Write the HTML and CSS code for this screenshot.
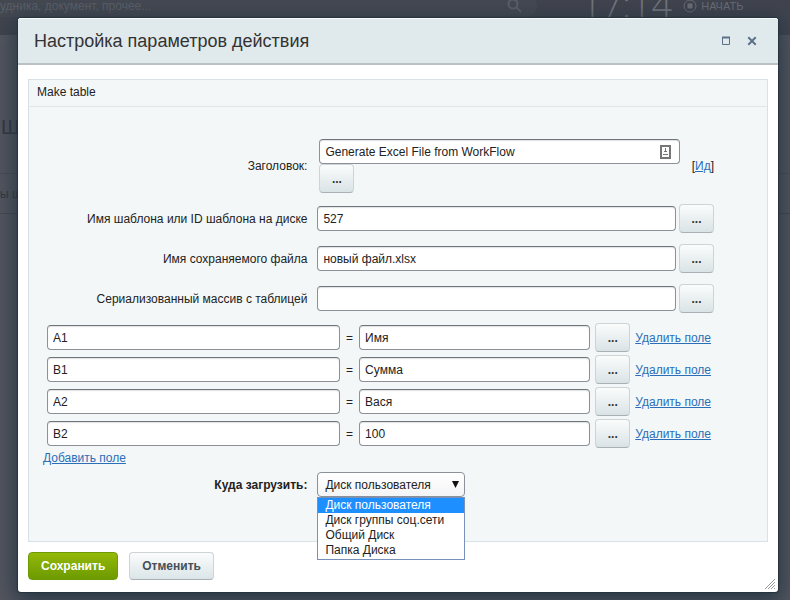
FILE: index.html
```html
<!DOCTYPE html>
<html lang="ru">
<head>
    <meta charset="UTF-8">
    <meta name="viewport" content="width=device-width, initial-scale=1.0">
    <title>Настройка параметров действия</title>
    <link rel="stylesheet" href="styles.css">
</head>
<body>
    <div class="page">
        <div class="topbar">
            <div class="search">
                <input type="text" class="search-input" aria-label="Поиск" placeholder="удника, документ, прочее...">
                <svg class="search-icon" width="16" height="16" viewBox="0 0 16 16" fill="none" stroke="currentColor" stroke-width="2">
                    <circle cx="6" cy="6" r="4.5"/>
                    <path d="M9.5 9.5L14 14"/>
                </svg>
            </div>
            <div class="clock">17:14</div>
            <div class="workday">
                <svg width="14" height="14" viewBox="0 0 14 14" fill="none" stroke="currentColor">
                    <circle cx="7" cy="7" r="6"/>
                    <rect x="4.5" y="4.5" width="5" height="5" fill="currentColor" stroke="none"/>
                </svg>
                <span>НАЧАТЬ</span>
            </div>
        </div>
        <div class="content">
            <div class="content-title">Ш</div>
            <div class="content-row">ы ш</div>
        </div>
    </div>

    <div class="overlay">
        <div class="dialog" role="dialog" aria-labelledby="dialog-title">
            <div class="dialog-header">
                <h1 class="dialog-title" id="dialog-title">Настройка параметров действия</h1>
                <button type="button" class="icon-btn" aria-label="Развернуть">
                    <svg width="10" height="10" viewBox="0 0 10 10" fill="none" stroke="currentColor">
                        <path d="M1.500 1v7.500h7V1"/>
                        <path d="M1 1.500h8" stroke-width="2"/>
                    </svg>
                </button>
                <button type="button" class="icon-btn" aria-label="Закрыть">
                    <svg width="10" height="10" viewBox="0 0 10 10" fill="none" stroke="currentColor" stroke-width="2">
                        <path d="M1.300 1.300L8.700 8.700M8.700 1.300L1.300 8.700"/>
                    </svg>
                </button>
            </div>

            <form class="dialog-body">
                <div class="panel">
                    <h2 class="panel-title">Make table</h2>

                    <div class="fields">
                        <div class="row">
                            <label class="label" for="title">Заголовок:</label>
                            <div class="control control-title">
                                <div class="title-box">
                                    <div class="input-wrap">
                                        <input type="text" class="input" id="title" value="Generate Excel File from WorkFlow">
                                        <svg class="autofill" width="11" height="14" viewBox="0 0 11 14" fill="none" stroke="currentColor">
                                            <rect x="1" y="1" width="9" height="12" stroke-width="2"/>
                                            <path d="M5.500 3v4M4 6.500h3M3 9.500h5"/>
                                        </svg>
                                    </div>
                                    <button type="button" class="btn-more">...</button>
                                </div>
                                <span class="id-link">[<a href="#">Ид</a>]</span>
                            </div>
                        </div>
                        <div class="row">
                            <label class="label" for="template">Имя шаблона или ID шаблона на диске</label>
                            <div class="control">
                                <input type="text" class="input" id="template" value="527">
                                <button type="button" class="btn-more">...</button>
                            </div>
                        </div>
                        <div class="row">
                            <label class="label" for="filename">Имя сохраняемого файла</label>
                            <div class="control">
                                <input type="text" class="input" id="filename" value="новый файл.xlsx">
                                <button type="button" class="btn-more">...</button>
                            </div>
                        </div>
                        <div class="row">
                            <label class="label" for="data">Сериализованный массив с таблицей</label>
                            <div class="control">
                                <input type="text" class="input" id="data" value="">
                                <button type="button" class="btn-more">...</button>
                            </div>
                        </div>
                    </div>

                    <div class="cells">
                        <div class="cell-row">
                            <input type="text" class="input cell-name" aria-label="Ячейка" value="A1">
                            <span class="equals">=</span>
                            <input type="text" class="input cell-value" aria-label="Значение" value="Имя">
                            <button type="button" class="btn-more">...</button>
                            <a href="#" class="cell-delete">Удалить поле</a>
                        </div>
                        <div class="cell-row">
                            <input type="text" class="input cell-name" aria-label="Ячейка" value="B1">
                            <span class="equals">=</span>
                            <input type="text" class="input cell-value" aria-label="Значение" value="Сумма">
                            <button type="button" class="btn-more">...</button>
                            <a href="#" class="cell-delete">Удалить поле</a>
                        </div>
                        <div class="cell-row">
                            <input type="text" class="input cell-name" aria-label="Ячейка" value="A2">
                            <span class="equals">=</span>
                            <input type="text" class="input cell-value" aria-label="Значение" value="Вася">
                            <button type="button" class="btn-more">...</button>
                            <a href="#" class="cell-delete">Удалить поле</a>
                        </div>
                        <div class="cell-row">
                            <input type="text" class="input cell-name" aria-label="Ячейка" value="B2">
                            <span class="equals">=</span>
                            <input type="text" class="input cell-value" aria-label="Значение" value="100">
                            <button type="button" class="btn-more">...</button>
                            <a href="#" class="cell-delete">Удалить поле</a>
                        </div>
                    </div>
                    <a href="#" class="add-field">Добавить поле</a>

                    <div class="row row-upload">
                        <label class="label label-bold" for="upload">Куда загрузить:</label>
                        <div class="control">
                            <div class="select-wrap">
                                <select class="select" id="upload">
                                    <option selected>Диск пользователя</option>
                                    <option>Диск группы соц.сети</option>
                                    <option>Общий Диск</option>
                                    <option>Папка Диска</option>
                                </select>
                                <svg class="select-arrow" width="7" height="7" viewBox="0 0 7 7" fill="currentColor">
                                    <path d="M0 0h7L3.500 7z"/>
                                </svg>
                                <ul class="select-list">
                                    <li class="active">Диск пользователя</li>
                                    <li>Диск группы соц.сети</li>
                                    <li>Общий Диск</li>
                                    <li>Папка Диска</li>
                                </ul>
                            </div>
                        </div>
                    </div>
                </div>

                <div class="buttons">
                    <button type="submit" class="btn btn-save">Сохранить</button>
                    <button type="button" class="btn btn-cancel">Отменить</button>
                </div>
            </form>

            <svg class="resize" width="12" height="12" viewBox="0 0 12 12" fill="none" stroke="currentColor">
                <path d="M1 11L11 1M4 11L11 4M7 11L11 7M10 11L11 10"/>
            </svg>
        </div>
    </div>
</body>
</html>
```

FILE: styles.css
```css
* {
    box-sizing: border-box;
}
body {
    margin: 0;
    font-family: "Liberation Sans", Arial, sans-serif;
    font-size: 12px;
    color: #222;
    background: #55565f;
}
a {
    color: #2a6fb8;
}
input, select, button {
    font-family: inherit;
    font-size: inherit;
    color: inherit;
}

/* page behind the dialog */
.page {
    min-height: 100vh;
    overflow: hidden;
}
.topbar {
    display: flex;
    align-items: flex-start;
    height: 35px;
    background: #41444e;
    color: #6b6e77;
}
.search {
    display: flex;
    align-items: center;
    flex: 0 0 68%;
    height: 22px;
    padding-right: 14px;
    margin-top: -5px;
    background: #454952;
    border-radius: 0 11px 11px 0;
    color: #5c6069;
}
.search-input {
    flex: 1;
    min-width: 0;
    padding: 0;
    border: 0;
    background: none;
    font-size: 12px;
}
.search-input::placeholder {
    color: #5c6069;
    opacity: 1;
}
.clock {
    width: 102px;
    margin: -19px 0 0 44px;
    font-family: "Open Sans", sans-serif;
    font-size: 36px;
    font-weight: 300;
    line-height: 48px;
    color: #74777f;
}
.workday {
    display: flex;
    align-items: center;
    gap: 4px;
    height: 12px;
    font-size: 11px;
}
.content {
    color: #34363f;
}
.content-title {
    height: 139px;
    padding: 81px 0 0 1px;
    border-bottom: 1px solid #4a4d57;
    font-size: 20px;
    line-height: 22px;
}
.content-row {
    height: 40px;
    line-height: 40px;
    border-bottom: 1px solid #454852;
}

/* dialog */
.overlay {
    position: absolute;
    inset: 0;
    display: flex;
    padding: 18px 12px 8px 18px;
}
.dialog {
    position: relative;
    flex: 1;
    display: flex;
    flex-direction: column;
    background: #fff;
    border-radius: 3px;
    box-shadow: 0 0 1px 1px #26333e, 0 6px 22px 4px rgba(30, 50, 65, 0.85);
}
.dialog-header {
    display: flex;
    align-items: center;
    gap: 6px;
    height: 47px;
    padding: 0 16px;
    background: #e0e9ec;
    border-top: 1px solid #f7fafa;
    border-bottom: 2px solid #bcc1c5;
    border-radius: 3px 3px 0 0;
}
.dialog-title {
    flex: 1;
    margin: 0;
    font-size: 18px;
    font-weight: normal;
    color: #333;
}
.icon-btn {
    display: flex;
    align-items: center;
    justify-content: center;
    width: 20px;
    height: 20px;
    padding: 0;
    border: 0;
    background: none;
    color: #5d7089;
}
.dialog-body {
    flex: 1;
    display: flex;
    flex-direction: column;
    padding: 14px 10px 12px;
}
.panel {
    flex: 1;
    background: #f3f7f8;
    border: 1px solid #d8e1e7;
}
.panel-title {
    margin: 0 0 32px;
    padding: 0 8px 2px;
    font-size: 12px;
    font-weight: normal;
    line-height: 24px;
    border-bottom: 1px solid #dde6eb;
}

.fields {
    display: flex;
    flex-direction: column;
    gap: 11px;
}
.row {
    display: flex;
    align-items: center;
    gap: 9px;
}
.label {
    flex: 0 0 38%;
    padding-right: 2px;
    text-align: right;
}
.label-bold {
    font-weight: bold;
}
.control {
    flex: 1;
    display: flex;
    align-items: center;
    gap: 3px;
    padding-right: 53px;
    margin-left: -1px;
}
.control-title {
    gap: 12px;
    padding-left: 2px;
}
.title-box {
    flex: 1;
}
.input-wrap {
    position: relative;
    display: flex;
}
.autofill {
    position: absolute;
    top: 6px;
    right: 9px;
    color: #777;
}
.id-link {
    white-space: nowrap;
}
.input {
    flex: 1;
    min-width: 0;
    height: 25px;
    padding: 0 5px;
    border: 1px solid #8b9099;
    border-top-color: #6f757d;
    border-radius: 4px;
    background: #fff;
    box-shadow: inset 0 1px 1px rgba(0, 0, 0, 0.12);
}
.btn-more {
    display: block;
    width: 35px;
    height: 29px;
    padding: 0;
    border: 1px solid #cdd4d8;
    border-bottom-color: #a9b1b6;
    border-radius: 4px;
    background: linear-gradient(#fbfcfc, #d9e3e6);
    font-weight: bold;
    color: #333;
}

.cells {
    display: flex;
    flex-direction: column;
    gap: 3px;
    margin-top: 10px;
    padding: 0 56px 0 18px;
}
.cell-row {
    display: flex;
    align-items: center;
}
.cell-name {
    flex: 295 1 0;
}
.cell-value {
    flex: 230 1 0;
}
.equals {
    width: 19px;
    text-align: center;
}
.cell-row .btn-more {
    margin: 0 5px;
}
.cell-delete {
    white-space: nowrap;
}
.add-field {
    display: inline-block;
    margin: 2px 0 0 14px;
    line-height: 16px;
}

.row-upload {
    margin-top: 6px;
}
.select-wrap {
    position: relative;
    width: 148px;
}
.select {
    display: block;
    width: 100%;
    height: 25px;
    padding: 0 7px;
    border: 1px solid #8b9099;
    border-radius: 4px;
    background: linear-gradient(#fff, #f3f4f5);
    appearance: none;
}
.select-arrow {
    position: absolute;
    top: 9px;
    right: 6px;
    color: #111;
}
.select-list {
    position: absolute;
    top: 100%;
    left: 0;
    right: 0;
    margin: 0;
    padding: 0 0 1px;
    list-style: none;
    background: #fff;
    border: 1px solid #7791b8;
}
.select-list li {
    padding: 0 7px;
    line-height: 15px;
}
.select-list .active {
    background: #1e8fff;
    color: #fff;
}

.buttons {
    display: flex;
    gap: 11px;
    margin-top: 10px;
}
.btn {
    height: 28px;
    padding: 0 12px;
    border-radius: 4px;
    font-weight: bold;
}
.btn-save {
    border: 1px solid #6f9a07;
    background: linear-gradient(#93b908, #6d9a00);
    color: #fff;
}
.btn-cancel {
    border: 1px solid #cdd4d8;
    border-bottom-color: #a9b1b6;
    background: linear-gradient(#fbfcfc, #dbe5e8);
    color: #45505a;
}
.resize {
    position: absolute;
    right: 2px;
    bottom: 2px;
    color: #999;
}
```
